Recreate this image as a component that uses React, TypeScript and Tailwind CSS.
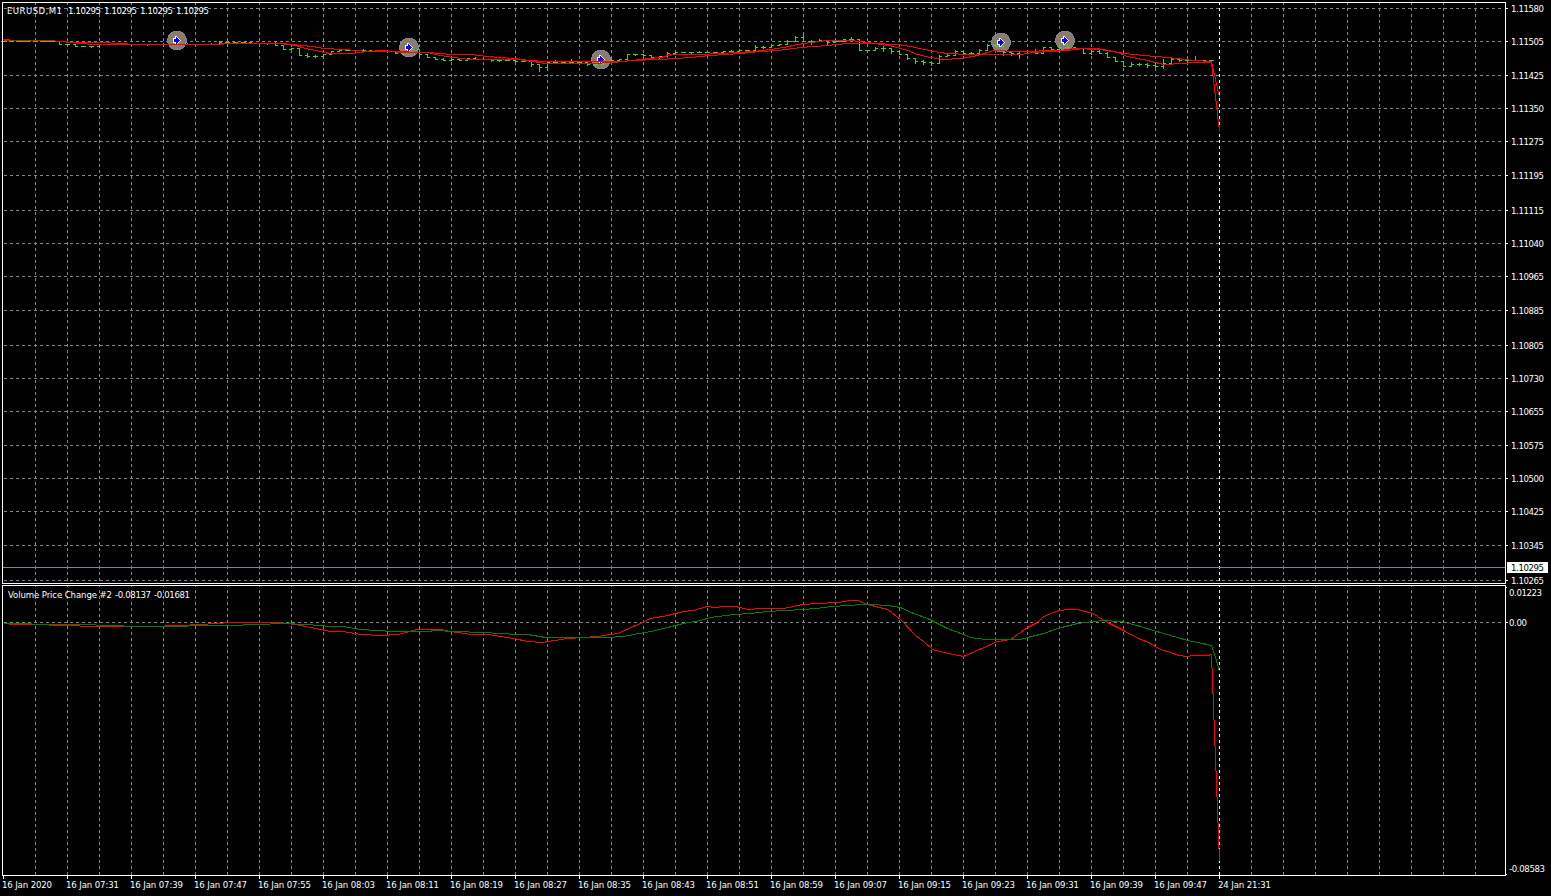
import React from 'react';

type Point = [number, number];
// x, high, low, close
type Bar = [number, number, number, number];

const GRID = '#778899';
const WIDTH = 1551;
const FRAME_RIGHT = 1505;
const LAST_BAR_X = 1219;

const priceLevels: { y: number; label: string }[] = [
  { y: 8, label: '1.11580' },
  { y: 41, label: '1.11505' },
  { y: 75, label: '1.11425' },
  { y: 108, label: '1.11350' },
  { y: 141, label: '1.11275' },
  { y: 175, label: '1.11195' },
  { y: 210, label: '1.11115' },
  { y: 243, label: '1.11040' },
  { y: 276, label: '1.10965' },
  { y: 310, label: '1.10885' },
  { y: 345, label: '1.10805' },
  { y: 378, label: '1.10730' },
  { y: 411, label: '1.10655' },
  { y: 445, label: '1.10575' },
  { y: 478, label: '1.10500' },
  { y: 511, label: '1.10425' },
  { y: 545, label: '1.10345' },
  { y: 580, label: '1.10265' },
];

const timeLabels = [
  '16 Jan 2020', '16 Jan 07:31', '16 Jan 07:39', '16 Jan 07:47', '16 Jan 07:55',
  '16 Jan 08:03', '16 Jan 08:11', '16 Jan 08:19', '16 Jan 08:27', '16 Jan 08:35',
  '16 Jan 08:43', '16 Jan 08:51', '16 Jan 08:59', '16 Jan 09:07', '16 Jan 09:15',
  '16 Jan 09:23', '16 Jan 09:31', '16 Jan 09:39', '16 Jan 09:47', '24 Jan 21:31',
];

const gridXs = Array.from({ length: 46 }, (_, i) => 35 + i * 32);

const bars: Bar[] = [
  [3, 41, 41, 41], [11, 41, 41, 41], [19, 41, 41, 41], [27, 41, 41, 41], [35, 41, 41, 41],
  [43, 41, 41, 41], [51, 41, 41, 41], [59, 41, 43, 44], [67, 44, 44, 44], [75, 44, 46, 46],
  [83, 46, 46, 46], [91, 46, 47, 46], [99, 45, 47, 44], [107, 44, 44, 44], [115, 43, 44, 44],
  [123, 44, 44, 44], [131, 44, 44, 44], [139, 44, 44, 44], [147, 44, 45, 44], [155, 44, 44, 44],
  [163, 43, 44, 44], [171, 44, 44, 44], [179, 44, 44, 44], [187, 43, 44, 44], [195, 44, 44, 44],
  [203, 44, 44, 44], [211, 43, 44, 44], [219, 41, 43, 42], [227, 42, 42, 42], [235, 42, 42, 42],
  [243, 42, 43, 42], [251, 42, 43, 43], [259, 43, 43, 43], [267, 43, 44, 43], [275, 42, 45, 45],
  [283, 45, 49, 49], [291, 48, 49, 48], [299, 48, 55, 55], [307, 53, 57, 56], [315, 55, 57, 56],
  [323, 54, 58, 54], [331, 51, 54, 51], [339, 49, 51, 50], [347, 50, 50, 50], [355, 50, 50, 50],
  [363, 49, 50, 50], [371, 50, 50, 51], [379, 51, 51, 51], [387, 51, 52, 51], [395, 52, 53, 53],
  [403, 53, 53, 52], [411, 49, 52, 49], [419, 49, 57, 54], [427, 54, 57, 57], [435, 57, 59, 59],
  [443, 58, 60, 60], [451, 57, 60, 59], [459, 58, 60, 60], [467, 58, 59, 58], [475, 57, 58, 59],
  [483, 59, 59, 59], [491, 59, 61, 60], [499, 59, 61, 60], [507, 60, 60, 60], [515, 60, 62, 61],
  [523, 61, 61, 61], [531, 60, 66, 64], [539, 64, 71, 67], [547, 63, 67, 62], [555, 60, 62, 62],
  [563, 62, 62, 62], [571, 59, 62, 62], [579, 62, 62, 62], [587, 63, 65, 64], [595, 62, 66, 64],
  [603, 62, 64, 60], [611, 59, 60, 60], [619, 59, 60, 59], [627, 54, 59, 54], [635, 54, 55, 54],
  [643, 54, 55, 55], [651, 55, 56, 57], [659, 56, 58, 56], [667, 52, 57, 53], [675, 50, 53, 52],
  [683, 52, 52, 52], [691, 52, 53, 52], [699, 51, 52, 52], [707, 52, 52, 52], [715, 52, 52, 52],
  [723, 52, 52, 51], [731, 50, 51, 51], [739, 49, 51, 50], [747, 50, 50, 50], [755, 45, 50, 47],
  [763, 46, 48, 47], [771, 45, 46, 45], [779, 44, 45, 44], [787, 40, 44, 41], [795, 36, 41, 37],
  [803, 33, 39, 41], [811, 40, 44, 41], [819, 39, 41, 40], [827, 40, 44, 42], [835, 41, 42, 41],
  [843, 39, 41, 39], [851, 37, 40, 39], [859, 39, 50, 50], [867, 50, 51, 50], [875, 47, 50, 48],
  [883, 46, 51, 48], [891, 48, 53, 51], [899, 50, 54, 54], [907, 54, 59, 58], [915, 58, 63, 61],
  [923, 60, 64, 62], [931, 61, 65, 63], [939, 55, 63, 56], [947, 54, 56, 55], [955, 50, 55, 51],
  [963, 51, 54, 53], [971, 52, 54, 53], [979, 49, 53, 50], [987, 44, 50, 45], [995, 44, 46, 46],
  [1003, 46, 55, 52], [1011, 52, 55, 53], [1019, 52, 58, 51], [1027, 51, 52, 51], [1035, 49, 51, 53],
  [1043, 47, 53, 47], [1051, 47, 49, 49], [1059, 44, 48, 47], [1067, 44, 47, 47], [1075, 47, 49, 48],
  [1083, 48, 53, 53], [1091, 50, 54, 51], [1099, 50, 53, 53], [1107, 52, 57, 57], [1115, 57, 61, 61],
  [1123, 61, 66, 66], [1131, 62, 66, 64], [1139, 63, 65, 64], [1147, 63, 67, 65], [1155, 62, 67, 66],
  [1163, 59, 68, 63], [1171, 57, 63, 59], [1179, 58, 61, 60], [1187, 60, 61, 60], [1195, 56, 60, 60],
  [1203, 60, 61, 60], [1211, 60, 60, 60],
];

const slowAverage: Point[] = [
  [3, 39], [16, 40], [48, 40], [60, 41], [75, 42], [103, 42], [118, 43], [137, 44], [200, 44],
  [240, 43], [280, 43], [292, 44], [300, 45], [312, 46], [323, 48], [343, 49], [367, 51],
  [390, 51], [427, 52], [450, 54], [470, 54], [487, 56], [513, 58], [530, 60], [543, 61],
  [583, 61], [623, 61], [630, 60], [660, 59], [690, 57], [710, 55], [740, 53], [760, 51],
  [777, 50], [800, 47], [827, 45], [847, 43], [872, 43], [897, 44], [910, 46], [933, 51],
  [947, 53], [967, 54], [1020, 54], [1033, 52], [1050, 51], [1067, 50], [1083, 48], [1097, 48],
  [1113, 51], [1123, 53], [1143, 55], [1167, 57], [1193, 60], [1211, 61], [1219, 97],
];

const fastAverage: Point[] = [
  [3, 40], [48, 40], [60, 41], [80, 43], [92, 44], [200, 44], [245, 43], [280, 43], [295, 45],
  [305, 48], [320, 51], [328, 53], [350, 53], [367, 51], [383, 50], [400, 52], [427, 52],
  [440, 55], [453, 57], [470, 59], [500, 59], [517, 59], [533, 61], [545, 63], [590, 63],
  [613, 62], [640, 59], [660, 57], [672, 54], [700, 54], [737, 52], [753, 51], [770, 49],
  [783, 47], [797, 44], [810, 42], [827, 40], [850, 40], [867, 42], [887, 45], [893, 46],
  [907, 50], [917, 54], [930, 57], [943, 59], [960, 58], [977, 55], [993, 50], [1017, 51],
  [1060, 50], [1073, 48], [1100, 49], [1117, 52], [1127, 56], [1147, 60], [1163, 64], [1183, 63],
  [1193, 62], [1211, 62], [1219, 131],
];

const volumeFast: Point[] = [
  [8, 624], [31, 624], [64, 625], [95, 626], [150, 626], [180, 625], [200, 624], [230, 622],
  [280, 622], [294, 624], [300, 625], [320, 629], [330, 631], [343, 631], [360, 634], [380, 635],
  [398, 634], [416, 629], [440, 629], [450, 631], [471, 634], [487, 634], [513, 638], [527, 641],
  [541, 642], [567, 638], [597, 636], [617, 633], [633, 626], [650, 618], [667, 615], [683, 611],
  [693, 610], [706, 606], [715, 607], [722, 606], [735, 606], [748, 609], [760, 608], [783, 608],
  [802, 604], [817, 603], [837, 602], [850, 600], [857, 600], [867, 604], [887, 609], [900, 619],
  [915, 635], [923, 641], [932, 649], [943, 652], [963, 656], [997, 641], [1010, 639], [1027, 627],
  [1037, 622], [1043, 616], [1058, 610], [1070, 609], [1077, 609], [1092, 613], [1107, 622],
  [1123, 630], [1140, 639], [1148, 642], [1160, 649], [1170, 652], [1178, 655], [1187, 656],
  [1193, 655], [1207, 655], [1211, 654], [1219, 861],
];

const volumeSlow: Point[] = [
  [3, 623], [31, 623], [32, 624], [95, 624], [96, 625], [150, 626], [183, 626], [192, 625],
  [230, 625], [255, 624], [285, 623], [304, 624], [320, 625], [328, 626], [343, 626], [360, 629],
  [377, 630], [392, 631], [430, 631], [432, 630], [457, 631], [480, 632], [503, 633], [513, 634],
  [527, 634], [545, 637], [607, 637], [623, 636], [633, 634], [650, 631], [667, 627], [683, 623],
  [700, 620], [710, 617], [733, 614], [750, 613], [767, 611], [803, 609], [815, 608], [832, 606],
  [847, 605], [863, 604], [870, 604], [887, 605], [900, 607], [913, 613], [927, 618], [947, 628],
  [963, 634], [970, 637], [985, 639], [1020, 639], [1027, 637], [1043, 633], [1057, 628],
  [1077, 623], [1093, 621], [1103, 620], [1120, 621], [1133, 624], [1153, 630], [1163, 633],
  [1177, 637], [1187, 640], [1197, 642], [1211, 645], [1215, 657], [1219, 671],
];

const markers: Point[] = [[177, 40], [409, 47], [601, 59], [1001, 42], [1065, 40]];

const toPoints = (points: Point[]) => points.map(([x, y]) => `${x + 0.5},${y + 0.5}`).join(' ');

const barsPath = bars
  .map(([x, high, low, close], i) => {
    const open = i > 0 ? bars[i - 1][3] : close;
    return `M${x - 2} ${open + 0.5}h3M${x + 0.5} ${high}V${low + 1}M${x} ${close + 0.5}h3`;
  })
  .join('');

const AxisText = ({ x, y, width, fill = '#fff', children }: {
  x: number;
  y: number;
  width: number;
  fill?: string;
  children: string;
}) => (
  <text x={x} y={y} textLength={width} fill={fill} className="whitespace-pre text-[9.5px]">
    {children}
  </text>
);

const Curve = ({ points, color }: { points: Point[]; color: string }) => (
  <polyline points={toPoints(points)} fill="none" stroke={color} />
);

const VerticalGrid = ({ top, bottom, phase }: { top: number; bottom: number; phase: number }) => (
  <g strokeDasharray="3 3" strokeDashoffset={phase}>
    {gridXs.map((x) => (
      <line
        key={x}
        x1={x + 0.5}
        x2={x + 0.5}
        y1={top}
        y2={bottom}
        stroke={x === LAST_BAR_X ? '#fff' : GRID}
      />
    ))}
  </g>
);

const Marker = ({ x, y }: { x: number; y: number }) => (
  <g>
    <circle cx={x} cy={y + 0.5} r="9.5" fill="#8c7b6b" stroke={GRID} />
    <path d={`M${x - 4} ${y - 2}h2v-2h2v1h1v1h1v1h1v1h1v1h-1v1h-1v1h-1v1h-1v1h-2v-2h-2z`} fill="#fff" />
    <path d={`M${x - 3} ${y - 1}h2v-2h1v1h1v1h1v1h1v1h-1v1h-1v1h-1v1h-1v-2h-2z`} fill="#00f" />
  </g>
);

const PriceChart = () => (
  <svg
    width={WIDTH}
    height={584}
    viewBox="0 0 1551 584"
    className="block shrink-0 overflow-visible"
    shapeRendering="crispEdges"
  >
    <VerticalGrid top={3} bottom={583} phase={1} />
    {priceLevels.map(({ y, label }) => (
      <g key={label}>
        <line x1={4} x2={1503} y1={y + 0.5} y2={y + 0.5} stroke={GRID} strokeDasharray="3 3" />
        <line x1={1506} x2={1508} y1={y + 0.5} y2={y + 0.5} stroke="#fff" />
        <AxisText x={1511} y={y + 4} width={33}>{label}</AxisText>
      </g>
    ))}
    {markers.map(([x, y]) => (
      <Marker key={x} x={x} y={y} />
    ))}
    <path d={barsPath} fill="none" stroke="#0f0" />
    <Curve points={slowAverage} color="#f00" />
    <Curve points={fastAverage} color="#f00" />
    <line x1={3} x2={FRAME_RIGHT} y1={567.5} y2={567.5} stroke={GRID} />
    <rect x={2.5} y={2.5} width={1503} height={581} fill="none" stroke="#fff" />
    <rect x={1507} y={562} width={41} height={11} fill="#fff" />
    <AxisText x={1511} y={571} width={33} fill="#000">1.10295</AxisText>
    <AxisText x={7} y={14} width={55}>EURUSD,M1</AxisText>
    {[68, 104, 140, 176].map((x) => (
      <AxisText key={x} x={x} y={14} width={33}>1.10295</AxisText>
    ))}
  </svg>
);

const VolumeChart = () => (
  <svg width={WIDTH} height={292} viewBox="0 584 1551 292" className="block shrink-0" shapeRendering="crispEdges">
    <VerticalGrid top={586} bottom={875} phase={2} />
    <line x1={4} x2={1503} y1={622.5} y2={622.5} stroke={GRID} strokeDasharray="3 3" />
    <Curve points={volumeFast} color="#f00" />
    <Curve points={volumeSlow} color="#008000" />
    <rect x={2.5} y={585.5} width={1503} height={290} fill="none" stroke="#fff" />
    <path d="M1506 587.5h1M1506 622.5h2M1506 874.5h1" stroke="#fff" />
    <AxisText x={1509} y={596} width={33}>0.01223</AxisText>
    <AxisText x={1509} y={626} width={18}>0.00</AxisText>
    <AxisText x={1509} y={872} width={36}>-0.08583</AxisText>
    <AxisText x={8} y={598} width={104}>Volume Price Change #2</AxisText>
    <AxisText x={115} y={598} width={36}>-0.08137</AxisText>
    <AxisText x={154} y={598} width={36}>-0.01681</AxisText>
  </svg>
);

const TimeAxis = () => (
  <div className="flex h-5 pl-0.5">
    {timeLabels.map((label, i) => (
      <div key={label} className="w-16 shrink-0">
        <svg width="64" height="20" className="block" shapeRendering="crispEdges">
          <rect x={1} width={1} height={3} fill="#fff" />
          <AxisText x={0} y={12} width={i === 0 ? 50 : 53}>{label}</AxisText>
        </svg>
      </div>
    ))}
  </div>
);

const App = () => {
  return (
    <div className="flex h-[896px] w-[1551px] flex-col overflow-hidden bg-black font-['DejaVu_Sans_Condensed','DejaVu_Sans',sans-serif]">
      <PriceChart />
      <VolumeChart />
      <TimeAxis />
    </div>
  );
};

export default App;
